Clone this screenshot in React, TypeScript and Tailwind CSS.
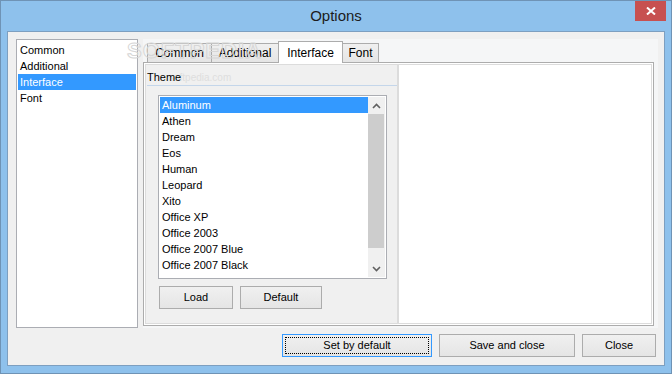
import React from 'react';

const sections = ['Common', 'Additional', 'Interface', 'Font'];

const themes = [
  'Aluminum',
  'Athen',
  'Dream',
  'Eos',
  'Human',
  'Leopard',
  'Xito',
  'Office XP',
  'Office 2003',
  'Office 2007 Blue',
  'Office 2007 Black',
  'Office 2007 Silver',
];

const tabs = [
  { label: 'Common', width: 'w-[65px]' },
  { label: 'Additional', width: 'w-[68px]' },
  { label: 'Interface', width: 'w-[65px]' },
  { label: 'Font', width: 'w-[37px]' },
];

function Chevron({ up }: { up?: boolean }) {
  return (
    <svg width="9" height="6" viewBox="0 0 9 6">
      <path
        d={up ? 'M1 5 L4.5 1.5 L8 5' : 'M1 1 L4.5 4.5 L8 1'}
        fill="none"
        stroke="#606060"
        strokeWidth="1.6"
      />
    </svg>
  );
}

function WinButton({
  label,
  width,
  focused,
}: {
  label: string;
  width: string;
  focused?: boolean;
}) {
  return (
    <div
      className={`relative h-[23px] ${width} flex items-center justify-center border bg-linear-to-b from-[#f0f0f0] to-[#e5e5e5] ${
        focused ? 'border-[#3399ff]' : 'border-[#acacac]'
      }`}
    >
      {focused && (
        <div className="absolute inset-[2px] border border-dotted border-black" />
      )}
      <span className="text-[11px] leading-[13px]">{label}</span>
    </div>
  );
}

export default function App() {
  const selectedSection = 'Interface';
  const selectedTab = 'Interface';
  const selectedTheme = 'Aluminum';

  return (
    <div className="w-[672px] h-[374px] bg-[#8ec1ec] border border-[#6f93b5] flex flex-col font-['Liberation_Sans',Arial,sans-serif] text-[11px] text-black overflow-hidden">
      {/* title bar */}
      <div className="relative h-[30px] flex items-center justify-center">
        <span className="text-[15px] text-[#1c1c1c] pt-[1px]">Options</span>
        <div className="absolute right-[5px] top-[-1px] w-[31px] h-[21px] bg-[#c75050] flex items-center justify-center">
          <svg width="10" height="8" viewBox="0 0 10 8">
            <path d="M1 0.5 L9 7.5 M9 0.5 L1 7.5" stroke="#ffffff" strokeWidth="2" />
          </svg>
        </div>
      </div>

      {/* client */}
      <div className="relative mx-[6px] mb-[7px] flex-1 bg-[#f0f0f0] border border-[#7d9fc0] flex flex-col">
        <div className="flex pl-[8px] pt-[7px]">
          <div className="w-[122px] h-[289px] border border-[#abadb3] bg-white p-[1px] pt-[2px]">
            {sections.map((s) => (
              <div
                key={s}
                className={`h-[16px] leading-[16px] pl-[2px] ${
                  s === selectedSection ? 'bg-[#3399ff] text-white' : ''
                }`}
              >
                {s}
              </div>
            ))}
          </div>

          <div className="ml-[5px] flex-1 mr-[6px] h-[289px] bg-[#f5f6f7] flex flex-col">
            {/* tabs */}
            <div className="h-[23px] flex items-end pl-[4px]">
              {tabs.map((t, i) => {
                const active = t.label === selectedTab;
                return (
                  <div
                    key={t.label}
                    className={`${t.width} ${i > 0 ? '-ml-px' : ''} flex items-center justify-center border border-b-0 border-[#acacac] text-[12px] leading-[14px] ${
                      active
                        ? 'relative z-10 h-[22px] -mb-px bg-white'
                        : 'h-[19px] bg-linear-to-b from-[#f0f0f0] to-[#e5e5e5]'
                    }`}
                  >
                    {t.label}
                  </div>
                );
              })}
            </div>

            {/* page */}
            <div className="w-[511px] h-[264px] border border-[#acacac] bg-white p-[1px]">
              <div className="h-full border border-[#dcdcdc] flex">
                <div className="w-[251px] bg-[#f0f0f0] flex flex-col">
                  <div className="relative ml-[1px] h-[21px] pt-[6px] leading-[13px] border-b border-[#c4d6ea]">
                    <span className="absolute left-[22px] top-[7px] text-[10px] leading-[12px] text-[#dedede]">
                      softpedia.com
                    </span>
                    <span className="relative">Theme</span>
                  </div>

                  <div className="mt-[9px] ml-[12px] w-[229px] h-[184px] border border-[#abadb3] bg-white p-[1px] flex">
                    <div className="flex-1 overflow-hidden">
                      {themes.map((t) => (
                        <div
                          key={t}
                          className={`h-[16px] leading-[16px] pl-[2px] whitespace-nowrap ${
                            t === selectedTheme ? 'bg-[#3399ff] text-white' : ''
                          }`}
                        >
                          {t}
                        </div>
                      ))}
                    </div>
                    <div className="w-[17px] bg-[#f0f0f0] flex flex-col">
                      <div className="h-[17px] flex items-center justify-center">
                        <Chevron up />
                      </div>
                      <div className="h-[134px] bg-[#cdcdcd] mr-[1px]" />
                      <div className="flex-1" />
                      <div className="h-[17px] flex items-center justify-center">
                        <Chevron />
                      </div>
                    </div>
                  </div>

                  <div className="mt-[7px] ml-[13px] flex gap-[7px]">
                    <WinButton label="Load" width="w-[74px]" />
                    <WinButton label="Default" width="w-[82px]" />
                  </div>
                </div>
                <div className="flex-1 bg-white border-l-2 border-[#dcdcdc]" />
              </div>
            </div>
          </div>
        </div>

        <div className="mt-[6px] flex justify-end gap-[7px] pr-[8px]">
          <WinButton label="Set by default" width="w-[150px]" focused />
          <WinButton label="Save and close" width="w-[136px]" />
          <WinButton label="Close" width="w-[74px]" />
        </div>

        {/* watermark */}
        <div className="absolute left-[119px] top-[7px] text-[22px] leading-[24px] font-bold tracking-[1px] text-transparent [-webkit-text-stroke:1px_#d6d6d6] pointer-events-none z-20">
          SOFTPEDIA
        </div>
      </div>
    </div>
  );
}
